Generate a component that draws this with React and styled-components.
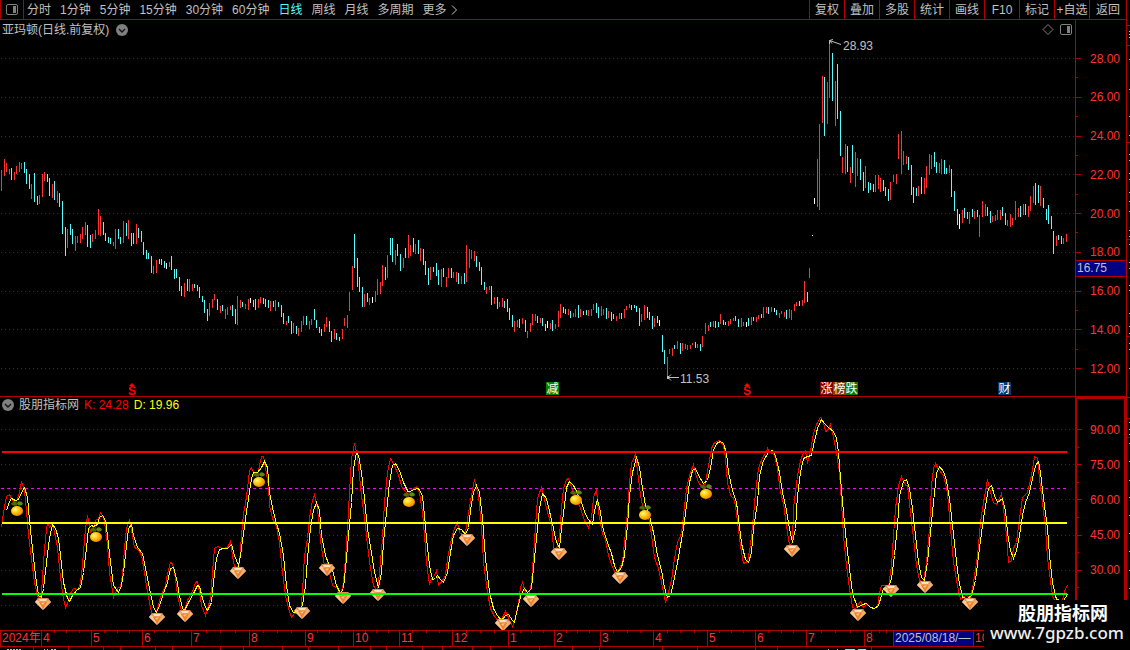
import React from "react";
import styled, { createGlobalStyle } from "styled-components";

const COLORS = {
  line: "#b00000",
  grid: "#a00000",
  up: "#ff3232",
  down: "#54fcfc",
  flat: "#ffffff",
  text: "#c0c0c0",
  icon: "#808080",
  navy: "#000080",
};

const GlobalStyle = createGlobalStyle`
  * {
    box-sizing: border-box;
  }
  body {
    margin: 0;
    background: #000;
    color: ${COLORS.text};
    font-family: "Liberation Sans", "Noto Sans CJK SC", sans-serif;
    font-size: 12px;
    line-height: 16px;
  }
`;

/* ---------- data ---------- */

const PLOT_WIDTH = 1075;
const PRICE = { top: 20, height: 376 };
const KD = { top: 397, height: 233 };

// x, high, low, r = up / c = down / w = flat
const CANDLES = `
1,170,191,r 4,159,176,r 6,163,172,r 9,169,174,r 11,168,180,c 14,172,180,r 16,166,174,r 19,162,172,r 21,163,169,r
24,162,173,c 26,169,184,c 29,174,189,c 31,184,199,r 34,173,202,c 37,196,205,c 39,195,204,r 42,174,197,r 44,172,181,r
47,174,182,c 49,178,196,c 52,184,198,r 54,181,200,c 57,191,203,r 59,193,207,c 62,201,234,c 65,227,256,c 67,229,248,r
70,224,235,c 72,229,244,c 75,236,251,r 77,236,243,r 80,234,243,r 82,227,239,r 85,222,235,r 87,225,247,c 90,235,248,c
92,234,242,r 95,230,239,r 98,209,235,r 100,216,236,r 103,222,235,c 105,233,241,c 108,237,243,c 110,238,244,c
113,242,246,r 115,229,249,r 118,229,239,c 120,237,244,c 123,221,243,r 126,223,236,c 128,220,239,r 131,233,246,c
133,233,244,c 136,224,244,r 138,228,238,c 141,231,242,c 143,242,255,c 146,250,259,c 148,253,259,c 151,256,273,c
153,266,274,r 156,260,273,r 159,259,264,c 161,259,265,c 164,261,268,c 166,263,269,w 169,262,267,r 171,256,270,c
174,269,279,c 176,269,278,c 179,277,291,c 181,286,296,c 184,283,297,r 187,279,291,c 189,279,292,r 192,284,291,r
194,284,288,c 197,285,291,c 199,287,298,c 202,296,302,c 204,300,313,c 207,309,321,c 209,303,316,r 212,299,308,r
214,294,300,r 217,299,310,c 220,306,313,r 222,305,311,c 225,309,319,r 227,307,315,r 230,306,310,r 232,305,316,c
235,309,324,c 237,296,325,r 240,300,308,r 242,302,307,c 245,304,309,r 248,299,310,r 250,298,303,w 253,300,307,c
255,299,310,c 258,299,308,r 260,297,303,r 263,298,304,c 265,299,307,c 268,300,308,c 270,301,311,r 273,301,307,c
275,300,311,r 278,302,307,c 281,305,317,c 283,313,324,c 286,321,325,r 288,316,323,c 291,321,334,c 293,323,333,r
296,326,334,c 298,328,336,r 301,321,332,r 303,316,325,r 306,316,325,c 309,321,329,r 311,319,325,r 314,309,320,c
316,320,328,c 319,327,333,c 321,329,336,c 324,324,332,r 326,317,327,r 329,321,332,c 331,331,342,c 334,329,339,r
336,333,340,c 339,337,341,c 342,329,339,r 344,318,326,r 347,315,328,r 349,292,311,r 352,266,290,r 354,234,268,c
357,258,287,c 359,277,292,c 362,287,307,c 364,294,307,r 367,293,302,c 369,298,305,r 372,297,303,w 375,291,302,r
377,279,295,r 380,282,294,r 382,265,286,r 385,267,280,c 387,255,278,r 390,238,255,c 392,238,262,c 395,250,265,r
397,244,256,c 400,254,271,c 403,258,268,r 405,248,258,c 408,235,258,r 410,245,256,r 413,238,252,c 415,244,254,r
418,240,254,c 420,248,261,r 423,249,265,c 425,261,275,c 428,268,285,c 430,267,280,r 433,267,272,c 436,263,276,c
438,270,285,c 441,269,287,r 443,268,277,c 446,277,287,r 448,268,278,r 451,268,278,c 453,272,278,r 456,272,282,r
458,273,284,c 461,276,284,r 464,273,284,c 466,245,282,r 469,249,268,r 471,250,259,r 474,251,261,r 476,256,267,c
479,262,271,c 481,267,285,c 484,282,290,c 486,287,294,r 489,286,290,r 491,286,305,c 494,297,304,r 497,297,309,c
499,302,307,r 502,298,307,r 504,301,308,c 507,299,312,c 509,308,320,c 512,315,327,c 514,321,332,r 517,320,327,r
519,319,328,c 522,318,324,r 525,320,332,c 527,331,338,r 530,323,332,r 532,314,325,r 535,314,321,r 537,316,323,c
540,318,323,r 542,318,326,c 545,324,331,c 547,321,328,w 550,323,329,r 552,320,331,c 555,324,329,r 558,311,327,r
560,304,318,r 563,307,313,c 565,309,314,c 568,309,315,r 570,311,318,c 573,313,317,r 575,309,317,r 578,305,318,c
580,309,317,r 583,311,315,c 586,310,315,c 588,310,316,r 591,309,316,r 593,304,310,r 596,303,313,c 598,307,318,c
601,306,316,r 603,309,315,r 606,308,319,c 608,311,318,r 611,312,321,c 613,314,319,c 616,316,321,r 619,313,319,r
621,313,319,c 624,309,318,r 626,306,310,r 629,304,308,r 631,305,310,c 634,305,308,c 636,306,312,c 639,308,326,c
641,314,322,r 644,305,320,r 647,307,318,c 649,312,320,c 652,316,329,c 654,318,327,r 657,316,323,c 659,320,326,w
662,335,352,c 664,350,364,c 667,357,376,r 669,349,354,r 672,348,356,r 674,345,349,c 677,341,349,r 680,343,354,c
682,343,351,r 685,344,349,r 687,345,350,r 690,345,349,r 692,343,345,r 695,342,348,c 697,344,348,r 700,344,351,c
702,336,347,r 705,323,334,r 708,325,331,r 710,322,327,c 713,321,327,r 715,321,328,c 718,322,327,c 720,314,324,r
723,320,325,c 725,322,325,c 728,321,326,r 730,319,324,r 733,318,321,r 735,316,321,c 738,319,327,c 741,318,327,r
743,322,326,r 746,322,327,w 748,318,326,c 751,317,325,r 753,317,321,c 756,317,322,r 758,315,319,r 761,314,318,c
763,307,318,r 766,307,313,r 768,307,314,c 771,307,312,r 774,308,312,w 776,310,315,c 779,313,318,r 781,311,314,r
784,312,317,r 786,310,319,c 789,309,318,r 791,310,320,r 794,304,311,r 796,302,306,r 799,301,306,c 802,300,306,r
804,281,303,r 807,292,302,c 809,268,278,r 812,235,236,w 814,198,204,w 817,159,207,r 819,124,210,r 822,76,123,r
824,77,136,c 827,82,124,r 829,43,98,r 832,53,101,c 835,81,126,r 837,64,119,c 840,111,156,c 842,157,173,r
845,144,174,r 847,146,172,c 850,167,183,r 852,145,173,c 855,152,187,r 857,158,176,r 860,159,180,c 863,172,191,c
865,166,188,r 868,182,193,c 870,183,190,c 873,184,192,c 875,175,192,r 878,175,189,r 880,178,192,r 883,180,191,c
885,187,196,c 888,189,201,c 890,182,200,r 893,175,182,r 896,174,184,r 898,134,159,r 901,131,174,r 903,151,165,r
906,156,164,r 908,157,170,c 911,165,195,c 913,187,203,c 916,188,196,c 918,186,196,r 921,177,194,c 924,178,194,r
926,166,188,r 929,154,175,r 931,155,169,r 934,152,167,c 936,162,173,c 939,163,173,r 941,159,174,r 944,160,174,c
946,168,174,c 949,165,173,r 951,169,197,c 954,191,211,c 957,209,225,c 959,214,229,w 962,210,223,r 964,208,218,c
967,212,219,c 969,212,224,r 972,209,217,c 974,211,219,r 977,210,217,c 979,215,237,r 982,201,217,r 985,204,216,r
987,207,216,c 990,211,223,c 992,216,222,r 995,215,221,r 997,210,220,r 1000,210,220,r 1002,207,216,c 1005,213,225,c
1007,220,226,r 1010,214,227,r 1012,218,225,r 1015,201,220,r 1018,208,217,r 1020,206,217,c 1023,204,215,r
1025,204,215,c 1028,206,217,r 1030,196,211,r 1033,186,203,r 1035,183,205,c 1038,185,203,c 1040,186,206,r
1043,198,208,c 1046,209,220,c 1048,205,224,c 1051,216,229,c 1053,231,254,c 1056,236,246,r 1058,235,240,c
1061,236,244,c 1063,238,244,r 1066,234,242,r
`
  .trim()
  .split(/\s+/)
  .map((row) => {
    const [x, high, low, kind] = row.split(",");
    return { x: +x, high: +high, low: +low, kind };
  });

const CANDLE_COLORS = { r: COLORS.up, c: COLORS.down, w: COLORS.flat };

const K_LINE = `
1,527 3,512 6,496 9,494 11,498 15,503 17,498 19,492 21,481 24,490 26,510 28,535 31,558 34,582 37,595 39,599 41,592
43,562 45,538 47,522 49,527 52,522 54,532 57,547 59,568 62,593 65,607 67,603 70,593 73,588 77,589 79,586 81,575
83,552 85,528 87,515 90,532 93,527 95,520 98,518 100,512 103,517 105,528 107,545 109,572 113,597 117,588 120,586
122,575 124,548 126,528 129,519 131,530 134,547 138,549 141,555 144,572 147,592 151,612 154,617 157,608 160,597
165,585 167,573 170,562 172,563 175,578 177,595 180,608 183,613 187,600 190,595 193,588 195,582 197,581 199,592
201,605 205,615 207,608 210,598 212,572 214,548 217,546 222,548 227,547 230,541 233,562 236,570 239,562 241,535
243,513 245,503 247,488 249,470 251,467 253,472 256,475 258,470 261,456 263,456 265,467 268,485 269,505 272,518
276,526 279,542 282,572 285,595 288,608 291,617 294,613 300,612 302,592 304,555 307,538 309,518 312,500 314,494
317,508 319,528 321,548 324,565 327,562 329,572 332,585 337,588 340,595 343,582 345,558 347,528 349,492 351,458
354,443 357,455 359,475 361,495 365,525 367,545 370,568 373,585 377,592 379,572 382,538 384,502 387,472 390,458
393,463 398,475 402,488 407,493 411,490 416,486 419,492 422,512 424,535 426,562 429,584 431,578 434,575 436,570
438,585 442,580 445,575 447,558 451,538 454,528 457,522 459,532 463,535 465,532 468,512 471,495 474,479 478,495
481,525 483,562 487,592 490,608 494,616 499,622 502,617 505,611 508,617 512,626 515,617 518,602 520,587 522,582
525,592 528,597 531,582 533,555 535,525 537,498 541,487 543,495 547,512 551,525 553,547 556,549 559,535 561,508
563,488 566,479 568,478 572,490 575,495 580,508 584,520 588,527 591,518 593,497 596,489 598,512 602,533 605,540
608,555 612,567 615,572 618,570 622,562 624,542 627,512 629,482 631,463 635,454 637,470 640,495 643,510 648,517
650,528 654,557 658,568 661,582 665,602 667,595 671,580 674,558 677,542 681,533 683,515 686,488 689,475 693,464
695,473 698,482 701,486 705,483 708,465 711,448 714,442 719,440 723,445 725,458 727,482 730,495 733,498 735,505
737,522 740,545 743,563 747,561 750,545 753,515 755,492 758,468 762,457 765,453 767,448 769,452 774,454 777,468
780,492 783,503 786,525 789,545 792,542 793,508 797,475 800,460 803,452 805,450 807,463 810,450 813,433 816,424
820,417 823,422 825,431 827,430 830,424 833,437 836,452 839,472 841,502 843,535 846,565 849,588 852,607 855,608
860,601 863,607 866,604 872,608 877,607 879,592 881,585 885,585 888,587 891,565 893,535 895,508 898,485 901,476
905,485 907,485 910,512 913,538 916,565 919,580 923,582 926,562 929,528 931,485 933,468 935,463 938,469 943,475
947,492 950,528 953,562 957,585 960,599 965,595 970,597 973,582 977,555 980,522 983,502 987,479 990,492 993,502
996,504 998,500 1001,493 1003,508 1006,535 1008,562 1011,560 1013,548 1016,542 1019,518 1022,497 1027,492 1031,475
1034,456 1037,458 1039,478 1042,502 1045,528 1047,558 1052,595 1055,602 1062,600 1065,588 1067,585
`;

const D_LINE = `
6,510 9,501 11,498 15,500 18,499 21,492 24,487 27,497 29,520 32,548 35,575 38,595 41,597 43,588 46,562 49,538
52,524 55,528 58,538 60,555 63,582 67,598 69,601 72,595 76,590 80,587 83,572 86,548 88,528 91,525 93,526 97,524
99,517 102,515 105,520 107,535 110,562 113,585 118,592 121,585 123,572 126,545 128,528 131,524 133,535 137,547
142,553 145,568 149,588 153,607 156,612 159,605 163,593 167,582 170,568 173,567 176,578 179,595 182,608 184,610
188,602 193,593 197,585 199,586 202,598 205,607 207,610 211,602 213,582 216,558 219,549 223,548 227,548 231,544
234,555 238,565 240,555 243,533 245,518 248,498 251,478 253,472 257,472 261,467 264,461 267,467 269,492 273,512
276,523 279,533 283,555 286,585 289,605 293,612 298,612 302,605 305,585 307,558 310,528 313,510 316,502 319,510
321,535 325,555 328,563 332,570 336,585 340,593 343,588 345,568 348,535 351,502 353,468 356,452 358,455 361,472
364,498 367,528 371,552 374,572 378,587 381,572 383,542 386,512 389,482 392,465 395,463 399,470 403,482 408,492
413,489 418,488 422,495 424,515 426,538 429,565 432,579 435,578 437,575 440,579 443,582 447,572 450,552 453,535
457,528 461,529 465,534 468,527 470,510 473,492 476,485 479,492 482,518 485,558 489,592 493,608 497,615 501,620
505,615 508,614 512,620 514,622 517,608 521,593 524,588 527,592 531,588 533,568 536,538 539,508 542,493 546,498
550,515 553,528 556,542 559,547 561,528 564,505 566,487 569,481 573,485 577,493 581,502 584,511 587,518 592,524
594,510 597,499 600,512 603,530 607,542 611,553 614,565 617,572 621,567 624,555 627,525 629,495 632,472 636,457
639,467 642,488 645,505 649,515 653,532 657,555 661,570 664,587 667,597 670,595 673,582 677,562 680,545 683,528
686,505 689,482 692,470 695,468 698,475 703,483 707,480 710,467 713,450 716,443 720,441 723,443 726,453 728,472
732,490 736,502 738,518 741,543 745,559 748,562 751,552 753,528 757,502 759,475 763,460 768,452 772,450 775,455
779,472 782,492 786,510 789,528 792,542 795,528 797,495 800,472 803,458 807,456 811,455 813,445 817,428 821,419
824,423 828,427 833,431 836,438 838,452 840,478 843,512 846,542 849,568 852,593 857,607 862,604 866,603 870,607
874,608 878,605 881,595 883,588 888,587 891,578 894,555 897,525 899,495 903,481 906,479 909,488 912,508 915,535
918,562 921,577 924,580 927,562 930,532 933,502 936,473 939,466 943,471 946,480 949,498 952,525 955,552 958,578
962,597 967,598 971,595 975,580 978,555 982,525 985,505 988,488 991,485 994,495 997,502 1002,498 1005,510
1007,532 1010,550 1013,558 1016,550 1019,535 1022,515 1025,502 1029,492 1032,478 1035,465 1038,461 1040,472
1043,498 1047,528 1049,555 1052,582 1056,599 1060,600 1063,600 1067,594
`;

const ORANGES = [
  [17, 510], [96, 536], [259, 481], [409, 501], [576, 499], [645, 514], [706, 493],
];

const GEMS = [
  [43, 605], [157, 620], [185, 617], [238, 574], [302, 614], [327, 571], [343, 599],
  [378, 596], [467, 541], [503, 626], [531, 602], [559, 555], [620, 579], [792, 552],
  [858, 616], [891, 592], [925, 588], [970, 605],
];

const PRICE_ROWS = [58, 97, 136, 174, 213, 252, 291, 329, 368];
const KD_ROWS = [429, 464, 499, 535, 570, 605];

const PRICE_TICKS = ["28.00", "26.00", "24.00", "22.00", "20.00", "18.00", "16.00", "14.00", "12.00"];
const KD_TICKS = ["90.00", "75.00", "60.00", "45.00", "30.00", ""];

const PERIODS = ["分时", "1分钟", "5分钟", "15分钟", "30分钟", "60分钟", "日线", "周线", "月线", "多周期"];
const ACTIONS = ["复权", "叠加", "多股", "统计", "画线", "F10", "标记", "+自选", "返回"];

const TAGS = [
  { text: "减", x: 546, color: "#008000" },
  { text: "涨", x: 820, color: "#800000" },
  { text: "榜", x: 833, color: "#804000" },
  { text: "跌", x: 845, color: "#008000" },
  { text: "财", x: 998, color: "#003870" },
];

const DIVIDENDS = [128, 743];

const MONTHS = [
  { text: "2024年", span: 41 },
  { text: "4", span: 50 },
  { text: "5", span: 51 },
  { text: "6", span: 49 },
  { text: "7", span: 58 },
  { text: "8", span: 56 },
  { text: "9", span: 48 },
  { text: "10", span: 46 },
  { text: "11", span: 53 },
  { text: "12", span: 56 },
  { text: "1", span: 46 },
  { text: "2", span: 46 },
  { text: "3", span: 53 },
  { text: "4", span: 54 },
  { text: "5", span: 48 },
  { text: "6", span: 51 },
  { text: "7", span: 58 },
  { text: "8", span: 29 },
  { text: "2025/08/18/—", span: 80, current: true },
  { text: "10", span: 153 },
];

const FOOT_TICKS = [
  33, 68, 103, 120, 155, 172, 220, 243, 282, 308, 338, 370, 386, 422, 442, 472, 490,
  539, 572, 599, 662, 697, 755, 777, 871,
];
const SIDE_LINES = [25, 45, 142, 239, 336, 397, 418, 437];
const SIDE_DOTS = [
  31, 34, 37, 59, 89, 116, 135, 154, 160, 173, 179, 192, 201, 211, 230, 236, 244,
  262, 268, 285, 290, 313, 326, 333, 343, 349, 368, 422, 429, 434, 443, 461, 480,
  497, 515, 533, 551, 570, 588,
];

/* ---------- styles ---------- */

const Terminal = styled.div`
  position: relative;
  display: grid;
  grid-template-columns: minmax(0, 1fr) 51px 4px;
  grid-template-rows: 20px minmax(0, 377fr) minmax(0, 233fr) 17px 3px;
  height: 100vh;
  min-height: 480px;
  overflow: hidden;
`;

const Toolbar = styled.header`
  grid-column: 1 / 3;
  display: flex;
  justify-content: space-between;
  border-bottom: 1px solid ${COLORS.line};
  border-left: 1px solid ${COLORS.line};
`;

const Periods = styled.nav`
  display: flex;
  gap: 9px;
`;

const ToolButton = styled.button`
  display: flex;
  align-items: center;
  justify-content: center;
  gap: 4px;
  padding: 0;
  border: 0;
  background: none;
  color: ${(p) => (p.$active ? COLORS.down : COLORS.text)};
  font: inherit;
  white-space: nowrap;
  cursor: pointer;
`;

const LayoutButton = styled(ToolButton)`
  width: 23px;
  margin-right: -6px;
  border-right: 1px solid ${COLORS.line};
`;

const Actions = styled.div`
  display: flex;
`;

const ActionButton = styled(ToolButton)`
  width: 35px;
  border-left: 1px solid ${COLORS.line};

  &:last-child {
    width: 37px;
  }
`;

const PricePane = styled.section`
  position: relative;
  border-bottom: 1px solid ${COLORS.line};
`;

const KdPane = styled.section`
  position: relative;
  overflow: hidden;
`;

const Plot = styled.svg`
  display: block;
  width: 100%;
  height: 100%;
`;

const PaneHeader = styled.div`
  position: absolute;
  inset: 0 0 auto;
  display: flex;
  align-items: center;
  gap: ${(p) => p.$gap}px;
  height: ${(p) => p.$height}px;
  padding: 0 3px 0 2px;
`;

const PaneTools = styled.div`
  display: flex;
  gap: 6px;
  margin-left: auto;
`;

const IconButton = styled.button`
  display: flex;
  padding: 0;
  border: 0;
  background: none;
  cursor: pointer;
`;

const Reading = styled.span`
  color: ${(p) => p.$color};
`;

const Pin = styled.div`
  position: absolute;
  display: flex;
  align-items: flex-start;
  height: 13px;
  line-height: 15px;
`;

const Tag = styled(Pin)`
  justify-content: center;
  width: 13px;
  background: ${(p) => p.$color};
  color: #fff;
`;

const Dividend = styled(Pin)`
  flex-direction: column;
  align-items: center;
  width: 8px;
  color: #f00;
  font-weight: 700;
  line-height: 10px;
`;

const PriceAxis = styled.ol`
  position: relative;
  display: flex;
  flex-direction: column;
  justify-content: space-between;
  margin: 0;
  padding: 31px 0 20px;
  border-left: 1px solid ${COLORS.line};
  border-bottom: 1px solid ${COLORS.line};
  list-style: none;
`;

const KdAxis = styled(PriceAxis)`
  padding: 23px 0 17px;
  border: 2px solid ${COLORS.line};
  border-bottom: 0;
`;

const Tick = styled.li`
  display: flex;
  align-items: center;
  justify-content: space-between;
  height: 15px;
  padding-right: ${(p) => (p.$wide ? 4 : 6)}px;
  color: ${COLORS.up};

  &::before {
    content: "";
    width: ${(p) => (p.$minor ? 2 : 5)}px;
    height: 1px;
    background: ${COLORS.line};
  }
`;

const LastPrice = styled.li`
  position: absolute;
  right: 0;
  left: 0;
  height: 17px;
  padding-left: 1px;
  border: solid ${COLORS.line};
  border-width: 1px 0;
  background: ${COLORS.navy};
  line-height: 15px;
`;

const Timeline = styled.ol`
  grid-column: 1 / 3;
  display: grid;
  grid-template-columns: ${MONTHS.map((m) => `minmax(0, ${m.span}fr)`).join(" ")};
  margin: 0;
  padding: 0;
  border: solid ${COLORS.line};
  border-width: 1px 0;
  list-style: none;
`;

const Month = styled.li`
  position: relative;
  padding-left: 1px;
  border-left: 1px solid ${COLORS.line};
  background: ${(p) => (p.$current ? COLORS.navy : "none")};
  color: ${(p) => (p.$current ? COLORS.text : COLORS.up)};
  line-height: 15px;
  white-space: nowrap;
`;

const MonthTicks = styled.div`
  position: absolute;
  inset: 0 0 auto;
  display: flex;
  justify-content: space-evenly;

  i {
    width: 1px;
    height: 2px;
    background: ${COLORS.line};
  }
`;

const Foot = styled.div`
  grid-column: 1 / 3;
  height: 3px;
`;

const Side = styled.aside`
  grid-column: 3;
  grid-row: 1 / 6;
  border-left: 1px solid ${COLORS.line};
`;

const Watermark = styled.div`
  position: absolute;
  right: 0;
  bottom: 0;
  display: flex;
  flex-direction: column;
  align-items: center;
  width: 146px;
  height: 50px;
  padding-top: 4px;
  background: #000;
  color: #fff;
`;

const SiteName = styled.strong`
  padding-left: 12px;
  font-size: 18px;
  line-height: 20px;
`;

const SiteLink = styled.a`
  color: #eee;
  font-family: "Noto Sans", sans-serif;
  font-size: 17px;
  font-weight: 500;
  line-height: 18px;
  text-decoration: none;
`;

/* ---------- drawings ---------- */

const PanelIcon = () => (
  <svg width="12" height="11" viewBox="0 0 12 11" fill="none">
    <rect x="0.5" y="0.5" width="11" height="10" rx="1.5" stroke={COLORS.icon} />
    <rect x="7" y="2" width="3" height="7" fill={COLORS.icon} />
  </svg>
);

const DiamondIcon = () => (
  <svg width="12" height="11" viewBox="0 0 12 11" fill="none">
    <path d="M6 0.5L11 5.5L6 10.5L1 5.5Z" stroke={COLORS.icon} />
  </svg>
);

const ChevronDisc = () => (
  <svg width="12" height="12" viewBox="0 0 12 12" fill="none">
    <circle cx="6" cy="6" r="6" fill={COLORS.icon} />
    <path d="M3 5L6 8L9 5" stroke="#111" strokeWidth="1.4" />
  </svg>
);

const MoreChevron = () => (
  <svg width="6" height="10" viewBox="0 0 6 10" fill="none">
    <path d="M1 0.5L5.5 5L1 9.5" stroke={COLORS.text} />
  </svg>
);

const Gem = ({ x, y }) => (
  <g transform={`translate(${x - 8} ${y - 7})`} shapeRendering="auto">
    <path d="M3 0H13L16 4L8 12L0 4Z" fill="#e89858" />
    <path d="M3 0H13L14 2H2Z" fill="#d89058" />
    <path d="M4 1H12L11 3H5Z" fill="#ffe0b8" />
    <path d="M0 4L2 2L5 4L8 12Z" fill="#f8c898" />
    <path d="M16 4L14 2L11 4L8 12Z" fill="#f0b070" />
    <path d="M4 4H12L8 11Z" fill="#f08028" />
    <path d="M6 5L10 4L8 7Z" fill="#ffc080" />
  </g>
);

const Orange = ({ x, y }) => (
  <g transform={`translate(${x} ${y})`} shapeRendering="auto">
    <path d="M-0.5 -4V-9" stroke="#4a3010" />
    <path d="M0 -5C-1 -9 -4 -9 -6 -6C-4 -4 -2 -4 0 -5Z" fill="#4a6a08" />
    <path d="M0 -6C1 -10 5 -9 6 -6C4 -4 2 -4 0 -6Z" fill="#5e8a10" />
    <ellipse cx="0" cy="1" rx="6" ry="5" fill="url(#orangeSkin)" />
  </g>
);

const GridRows = ({ rows }) =>
  rows.map((y) => (
    <path
      key={y}
      d={`M1 ${y + 0.5}H${PLOT_WIDTH}`}
      stroke={COLORS.grid}
      strokeDasharray="1 3"
    />
  ));

const percent = (value, total) => `${(value / total) * 100}%`;

const pinStyle = (x, y) => ({
  left: percent(x, PLOT_WIDTH),
  top: percent(y - PRICE.top, PRICE.height),
});

const AxisTicks = ({ ticks, wide }) =>
  ticks.map((tick, i) => (
    <React.Fragment key={i}>
      {i > 0 && <Tick $minor $wide={wide} />}
      <Tick $wide={wide}>{tick}</Tick>
    </React.Fragment>
  ));

const PriceChart = () => (
  <PricePane>
    <Plot
      viewBox={`0 ${PRICE.top} ${PLOT_WIDTH} ${PRICE.height}`}
      preserveAspectRatio="none"
      shapeRendering="crispEdges"
    >
      <GridRows rows={PRICE_ROWS} />
      {CANDLES.map(({ x, high, low, kind }) => (
        <rect
          key={x}
          x={x}
          y={high}
          width="1"
          height={low - high}
          fill={CANDLE_COLORS[kind]}
        />
      ))}
    </Plot>
    <PaneHeader $gap={7} $height={19}>
      <span>亚玛顿(日线.前复权)</span>
      <IconButton aria-label="展开">
        <ChevronDisc />
      </IconButton>
      <PaneTools>
        <IconButton aria-label="标注">
          <DiamondIcon />
        </IconButton>
        <IconButton aria-label="侧栏">
          <PanelIcon />
        </IconButton>
      </PaneTools>
    </PaneHeader>
    <Pin style={pinStyle(829, 39)}>
      <svg width="14" height="13" viewBox="0 0 14 13" fill="none" stroke={COLORS.text}>
        <path d="M0.5 5V1.5L4 0.5M0.5 1.5L12 5.5M1 2L3 4.5" />
      </svg>
      28.93
    </Pin>
    <Pin style={pinStyle(667, 372)}>
      <svg width="13" height="13" viewBox="0 0 13 13" fill="none" stroke={COLORS.text}>
        <path d="M0 5.5H12M4 2.5L1 5.5L4 8.5" />
        <rect x="0.5" y="4.5" width="1" height="2" />
      </svg>
      11.53
    </Pin>
    {DIVIDENDS.map((x) => (
      <Dividend key={x} style={pinStyle(x, 383)}>
        <svg width="6" height="3" viewBox="0 0 6 3">
          <path d="M3 0L6 3H0Z" fill="#f00" />
        </svg>
        S
      </Dividend>
    ))}
    {TAGS.map(({ text, x, color }) => (
      <Tag key={x} $color={color} style={pinStyle(x, 382)}>
        {text}
      </Tag>
    ))}
  </PricePane>
);

const KdChart = () => (
  <KdPane>
    <Plot
      viewBox={`0 ${KD.top} ${PLOT_WIDTH} ${KD.height}`}
      preserveAspectRatio="none"
      shapeRendering="crispEdges"
      fill="none"
    >
      <defs>
        <radialGradient id="orangeSkin" cx="0.35" cy="0.35" r="0.7">
          <stop offset="0" stopColor="#fff890" />
          <stop offset="0.4" stopColor="#ffd010" />
          <stop offset="1" stopColor="#f08000" />
        </radialGradient>
      </defs>
      <GridRows rows={KD_ROWS} />
      <path d="M1 488.5H1067" stroke="#ff00ff" strokeDasharray="3 3" />
      <polyline points={K_LINE.trim()} stroke="#ff0000" transform="translate(0.5 0.5)" />
      <polyline points={D_LINE.trim()} stroke="#ffff00" transform="translate(0.5 0.5)" />
      {ORANGES.map(([x, y]) => (
        <Orange key={x} x={x} y={y} />
      ))}
      {GEMS.map(([x, y]) => (
        <Gem key={x} x={x} y={y} />
      ))}
      <path d="M2 452H1067" stroke="#ff0000" strokeWidth="2" />
      <path d="M2 523H1067" stroke="#ffff00" strokeWidth="2" />
      <path d="M2 594H1067" stroke="#00ff00" strokeWidth="2" />
    </Plot>
    <PaneHeader $gap={5} $height={16}>
      <IconButton aria-label="展开指标">
        <ChevronDisc />
      </IconButton>
      <span>股朋指标网</span>
      <Reading $color="#ff0000">K: 24.28</Reading>
      <Reading $color="#ffff00">D: 19.96</Reading>
    </PaneHeader>
  </KdPane>
);

const App = () => (
  <>
    <GlobalStyle />
    <Terminal>
      <Toolbar>
        <Periods>
          <LayoutButton aria-label="布局">
            <PanelIcon />
          </LayoutButton>
          {PERIODS.map((period) => (
            <ToolButton key={period} $active={period === "日线"}>
              {period}
            </ToolButton>
          ))}
          <ToolButton>
            更多
            <MoreChevron />
          </ToolButton>
        </Periods>
        <Actions>
          {ACTIONS.map((action) => (
            <ActionButton key={action}>{action}</ActionButton>
          ))}
        </Actions>
      </Toolbar>

      <PriceChart />
      <PriceAxis>
        <AxisTicks ticks={PRICE_TICKS} />
        <LastPrice style={{ top: percent(240, 376) }}>16.75</LastPrice>
      </PriceAxis>

      <KdChart />
      <KdAxis>
        <AxisTicks ticks={KD_TICKS} wide />
      </KdAxis>

      <Timeline>
        {MONTHS.map(({ text, current }, i) => (
          <Month key={i} $current={current}>
            {text}
            {!current && i > 0 && (
              <MonthTicks>
                <i />
                <i />
                <i />
              </MonthTicks>
            )}
          </Month>
        ))}
      </Timeline>

      <Foot>
        <Plot viewBox="0 0 1126 3" preserveAspectRatio="none" shapeRendering="crispEdges">
          {FOOT_TICKS.map((x) => (
            <rect key={x} x={x} y="0" width="1" height="3" fill={COLORS.line} />
          ))}
          <path d="M7 2.5H22M44 2.5H45M47 2.5H48M51 2.5H56" stroke={COLORS.text} strokeDasharray="2 1" />
          <path d="M828 2.5H829M837 2.5H838" stroke={COLORS.text} />
          <path d="M845 2.5H855M858 2.5H866" stroke={COLORS.down} />
        </Plot>
      </Foot>

      <Side>
        <Plot viewBox="0 0 3 650" preserveAspectRatio="none" shapeRendering="crispEdges">
          {SIDE_LINES.map((y) => (
            <rect key={y} x="0" y={y} width="3" height="1" fill={COLORS.line} />
          ))}
          {SIDE_DOTS.map((y) => (
            <rect key={y} x="2" y={y} width="1" height="1" fill={COLORS.text} />
          ))}
        </Plot>
      </Side>

      <Watermark>
        <SiteName>股朋指标网</SiteName>
        <SiteLink href="#home">www.7gpzb.com</SiteLink>
      </Watermark>
    </Terminal>
  </>
);

export default App;
